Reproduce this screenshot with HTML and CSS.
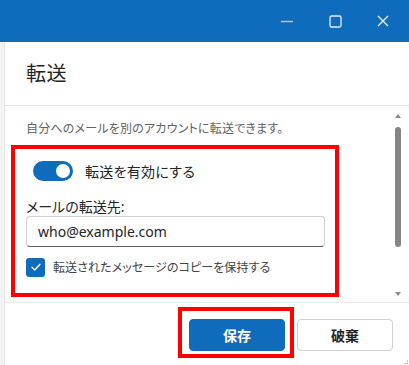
FILE: index.html
```html
<!DOCTYPE html>
<html lang="ja">
<head>
<meta charset="utf-8">
<link rel="stylesheet" href="styles.css">
</head>
<body>
<div class="titlebar">
  <div class="tb-btn">
    <svg width="12" height="12" viewBox="0 0 12 12"><line x1="0" y1="6.5" x2="12" y2="6.5" stroke="#b4cde9" stroke-width="1.4"/></svg>
  </div>
  <div class="tb-btn">
    <svg width="13" height="13" viewBox="0 0 13 13"><rect x="1" y="1" width="11" height="11" rx="1.5" fill="none" stroke="#e6eef8" stroke-width="1.3"/></svg>
  </div>
  <div class="tb-btn">
    <svg width="12" height="12" viewBox="0 0 12 12"><path d="M1 1 L11 11 M11 1 L1 11" stroke="#eef3fa" stroke-width="1.3" fill="none"/></svg>
  </div>
</div>
<div class="window">
  <div class="dialog">
    <div class="header"><h1 class="title">転送</h1></div>
    <div class="body">
      <div class="content">
        <p class="desc">自分へのメールを別のアカウントに転送できます。</p>
        <div class="group">
          <div class="toggle-row">
            <span class="toggle"><span class="knob"></span></span>
            <span class="toggle-label">転送を有効にする</span>
          </div>
          <div class="field-label">メールの転送先:</div>
          <div class="input">who@example.com</div>
          <div class="check-row">
            <span class="checkbox">
              <svg width="12" height="12" viewBox="0 0 12 12"><path d="M2 6.3 L4.8 9 L10 3.2" stroke="#fff" stroke-width="1.3" fill="none" stroke-linecap="round" stroke-linejoin="round"/></svg>
            </span>
            <span class="check-label">転送されたメッセージのコピーを保持する</span>
          </div>
          <div class="mark mark-group"></div>
        </div>
      </div>
      <div class="scrollbar">
        <span class="arrow up"></span>
        <span class="track"><span class="thumb"></span></span>
        <span class="arrow down"></span>
      </div>
    </div>
    <div class="footer">
      <div class="btn-wrap">
        <button class="btn primary">保存</button>
        <div class="mark mark-save"></div>
      </div>
      <button class="btn secondary">破棄</button>
      <span class="grip"></span>
    </div>
  </div>
</div>
</body>
</html>
```
FILE: styles.css
```css
* { box-sizing: border-box; }
html, body { margin: 0; padding: 0; }
body {
  width: 409px;
  height: 365px;
  overflow: hidden;
  background: #fff;
  font-family: "Noto Sans", "Noto Sans CJK JP", sans-serif;
  font-feature-settings: "palt";
  color: #242424;
}
.titlebar {
  height: 42px;
  background: #0f6cbd;
  display: flex;
  justify-content: flex-end;
  padding-right: 2px;
}
.tb-btn {
  width: 48px;
  height: 42px;
  display: flex;
  align-items: center;
  justify-content: center;
}
.window {
  display: flex;
  height: 323px;
  background: #f3f3f3;
  padding-left: 4px;
}
.dialog {
  flex: 1;
  background: #fff;
  border-left: 1px solid #e8e8e8;
  display: flex;
  flex-direction: column;
}
.header {
  height: 64px;
  border-bottom: 1px solid #e6e6e6;
  display: flex;
  align-items: center;
  padding-left: 21px;
  padding-bottom: 2px;
}
.title {
  margin: 0;
  font-size: 20px;
  font-weight: 400;
  letter-spacing: 0.5px;
}
.body {
  height: 197px;
  display: flex;
  border-bottom: 1px solid #ebebeb;
}
.content {
  flex: 1;
  padding: 13px 0 0 21px;
}
.desc {
  margin: 0;
  font-size: 12px;
  letter-spacing: 0.2px;
  line-height: 20px;
  color: #616161;
}
.group {
  position: relative;
  padding-top: 22px;
  width: 299px;
}
.toggle-row {
  display: flex;
  align-items: center;
  height: 20px;
  padding-left: 7px;
}
.toggle {
  width: 40px;
  height: 20px;
  border-radius: 10px;
  background: #0f6cbd;
  position: relative;
  flex: none;
}
.knob {
  position: absolute;
  right: 3px;
  top: 3px;
  width: 14px;
  height: 14px;
  border-radius: 50%;
  background: #fff;
}
.toggle-label {
  margin-left: 12px;
  font-size: 14px;
  letter-spacing: 0.3px;
}
.field-label {
  margin-top: 16px;
  font-size: 14px;
  line-height: 19px;
}
.input {
  margin-top: 0;
  height: 31px;
  border: 1px solid #d1d1d1;
  border-bottom-color: #616161;
  border-radius: 4px;
  padding-left: 11px;
  font-size: 14px;
  line-height: 29px;
  font-family: "Noto Sans", sans-serif;
}
.check-row {
  display: flex;
  align-items: center;
  margin-top: 10px;
  height: 20px;
}
.checkbox {
  width: 19px;
  height: 19px;
  border-radius: 3px;
  background: #0f6cbd;
  display: flex;
  align-items: center;
  justify-content: center;
  flex: none;
}
.check-label {
  margin-left: 8px;
  font-size: 12px;
  letter-spacing: 0.1px;
  color: #424242;
}
.mark {
  position: absolute;
  border: 4px solid #ff0000;
  pointer-events: none;
}
.mark-group {
  left: -15px;
  top: 6px;
  width: 328px;
  height: 152px;
}
.scrollbar {
  width: 14px;
  margin-right: 4px;
  display: flex;
  flex-direction: column;
  align-items: center;
  padding: 8px 0 6px;
}
.arrow {
  width: 0;
  height: 0;
  border-left: 3px solid transparent;
  border-right: 3px solid transparent;
  flex: none;
}
.arrow.up { border-bottom: 4px solid #8a8a8a; }
.arrow.down { border-top: 4px solid #8a8a8a; }
.track {
  flex: 1;
  width: 6px;
  padding-top: 9px;
}
.thumb {
  display: block;
  width: 6px;
  height: 120px;
  border-radius: 3px;
  background: #858585;
}
.footer {
  flex: 1;
  display: flex;
  justify-content: flex-end;
  align-items: flex-start;
  gap: 12px;
  padding: 16px 16px 0 0;
  position: relative;
}
.btn-wrap { position: relative; }
.btn {
  width: 96px;
  height: 32px;
  border-radius: 4px;
  font-family: "Noto Sans CJK JP", sans-serif;
  font-size: 14px;
  font-weight: 700;
  padding: 0;
  display: block;
}
.primary {
  background: #0f6cbd;
  border: 1px solid #0f6cbd;
  color: #fff;
}
.secondary {
  background: #fff;
  border: 1px solid #d1d1d1;
  color: #242424;
}
.mark-save {
  left: -11px;
  top: -12px;
  width: 116px;
  height: 51px;
}
.grip {
  position: absolute;
  right: 1px;
  bottom: 1px;
  width: 4px;
  height: 4px;
  border-right: 1px solid #c8c8c8;
  border-bottom: 1px solid #c8c8c8;
}
```
